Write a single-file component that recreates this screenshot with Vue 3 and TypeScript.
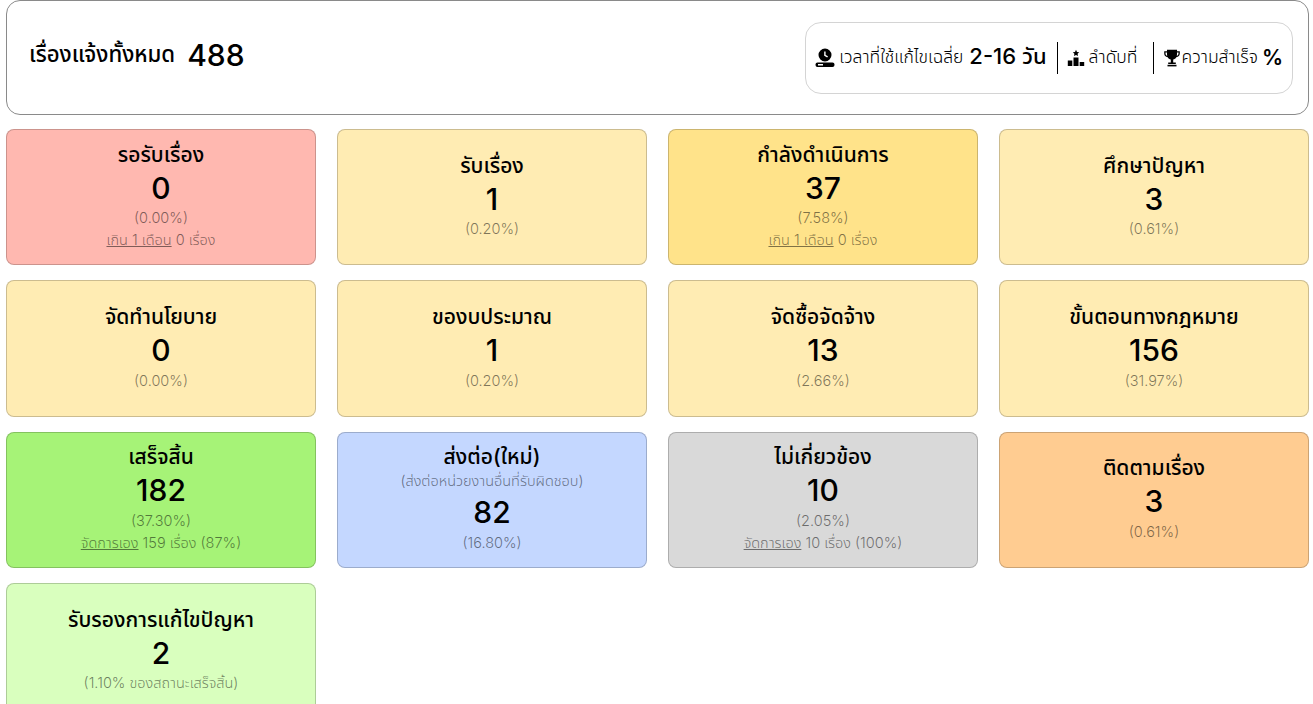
<script setup lang="ts">
interface Card {
  title: string
  hint?: string
  count: number
  pct: string
  linkText?: string
  rest?: string
  tone: string
}

const cards: Card[] = [
  { title: 'รอรับเรื่อง', count: 0, pct: '(0.00%)', linkText: 'เกิน 1 เดือน', rest: ' 0 เรื่อง', tone: 'red' },
  { title: 'รับเรื่อง', count: 1, pct: '(0.20%)', tone: 'cream' },
  { title: 'กำลังดำเนินการ', count: 37, pct: '(7.58%)', linkText: 'เกิน 1 เดือน', rest: ' 0 เรื่อง', tone: 'yellow' },
  { title: 'ศึกษาปัญหา', count: 3, pct: '(0.61%)', tone: 'cream' },
  { title: 'จัดทำนโยบาย', count: 0, pct: '(0.00%)', tone: 'cream' },
  { title: 'ของบประมาณ', count: 1, pct: '(0.20%)', tone: 'cream' },
  { title: 'จัดซื้อจัดจ้าง', count: 13, pct: '(2.66%)', tone: 'cream' },
  { title: 'ขั้นตอนทางกฎหมาย', count: 156, pct: '(31.97%)', tone: 'cream' },
  { title: 'เสร็จสิ้น', count: 182, pct: '(37.30%)', linkText: 'จัดการเอง', rest: ' 159 เรื่อง (87%)', tone: 'green' },
  { title: 'ส่งต่อ(ใหม่)', hint: '(ส่งต่อหน่วยงานอื่นที่รับผิดชอบ)', count: 82, pct: '(16.80%)', tone: 'blue' },
  { title: 'ไม่เกี่ยวข้อง', count: 10, pct: '(2.05%)', linkText: 'จัดการเอง', rest: ' 10 เรื่อง (100%)', tone: 'grey' },
  { title: 'ติดตามเรื่อง', count: 3, pct: '(0.61%)', tone: 'orange' },
  { title: 'รับรองการแก้ไขปัญหา', count: 2, pct: '(1.10% ของสถานะเสร็จสิ้น)', tone: 'lime' },
]
</script>

<template>
  <div class="page">
    <header class="summary">
      <div class="total">
        <span class="total-label">เรื่องแจ้งทั้งหมด</span>
        <span class="total-num">488</span>
      </div>
      <div class="stats">
        <div class="stat stat-time">
          <svg class="ico" width="20" height="20" viewBox="0 0 20 20">
            <path fill="#000" fill-rule="evenodd" d="M10 0.5a6.500 6.500 0 1 1 0 13a6.500 6.500 0 0 1 0-13zM9.200 3.500v4.200l3 1.800l.8-1.200l-2.400-1.400V3.500z" />
            <path fill="#000" fill-rule="evenodd" d="M2.500 14.500h15a2 2 0 0 1 2 2v.5a2 2 0 0 1-2 2h-15a2 2 0 0 1-2-2v-.5a2 2 0 0 1 2-2zM3 16v1.500h5V16z" />
          </svg>
          <span class="stat-text">เวลาที่ใช้แก้ไขเฉลี่ย</span>
          <b class="stat-strong">2-16 วัน</b>
        </div>
        <div class="stat stat-rank">
          <svg class="ico" width="18" height="18" viewBox="0 0 18 18">
            <path fill="#000" d="M9 .8l1 2.100l2.200.3l-1.600 1.500l.4 2.200L9 5.900L7 6.900l.4-2.200L5.800 3.200L8 2.900zM6.500 8.500h5v8.500h-5zM.8 11.500h4.500v5.500H.8zM12.700 13h4.500v4h-4.500z" />
          </svg>
          <span class="stat-text">ลำดับที่</span>
        </div>
        <div class="stat stat-win">
          <svg class="ico" width="16" height="18" viewBox="0 0 16 18">
            <path fill="#000" fill-rule="evenodd" d="M3 .8h10v1.400h2.800v2.300c0 2-1.400 3.500-3.500 3.700c-.7 1.300-1.800 2.100-3.100 2.400v2.900h2.600v1.500H4.200v-1.500h2.600v-2.900c-1.300-.3-2.400-1.100-3.100-2.400C1.600 8 .2 6.500.2 4.500V2.200H3zM1.500 3.500v1c0 1.200.7 2.100 1.700 2.400c-.1-.5-.2-1-.2-1.600V3.500zM13 3.500v1.800c0 .6-.1 1.100-.2 1.600c1-.3 1.700-1.200 1.700-2.400v-1z" />
            <rect x="3.500" y="15.800" width="9" height="1.600" />
          </svg>
          <span class="stat-text">ความสำเร็จ</span>
          <b class="stat-strong stat-pct">%</b>
        </div>
      </div>
    </header>

    <section class="grid">
      <article v-for="card in cards" :key="card.title" class="card" :class="card.tone">
        <div class="card-title">{{ card.title }}</div>
        <div v-if="card.hint" class="card-small">{{ card.hint }}</div>
        <div class="card-num">{{ card.count }}</div>
        <div class="card-small">{{ card.pct }}</div>
        <div v-if="card.linkText" class="card-small">
          <u>{{ card.linkText }}</u>{{ card.rest }}
        </div>
      </article>
    </section>
  </div>
</template>

<style>
html, body {
  margin: 0;
  background: #fff;
}
</style>

<style scoped>
.page {
  padding: 0 4px 0 6px;
  font-family: Inter, "Noto Sans Thai", sans-serif;
  color: #000;
}

.summary {
  height: 115px;
  box-sizing: border-box;
  border: 1px solid #8a8a8a;
  border-radius: 14px;
  display: flex;
  align-items: center;
  justify-content: space-between;
  padding: 0 15px 5px 22px;
  margin-bottom: 13.950px;
}
.total {
  display: flex;
  align-items: center;
  gap: 12px;
}
.total-label { font-size: 22.200px; font-weight: 500; }
.total-num { font-size: 30px; font-weight: 500; }

.stats {
  height: 72px;
  box-sizing: border-box;
  border: 1px solid #d4d4d4;
  border-radius: 16px;
  display: flex;
  align-items: center;
  padding: 0 9px;
  margin-top: 5px;
}
.stat {
  display: flex;
  align-items: center;
  height: 32px;
  gap: 4px;
}
.stat-rank { border-left: 1px solid #000; margin-left: 10px; padding-left: 9px; width: 96px; box-sizing: border-box; }
.stat-win { border-left: 1px solid #000; padding-left: 10px; gap: 2px; }
.stat-text { font-size: 17.500px; font-weight: 300; }
.stat-strong { font-size: 22px; font-weight: 500; margin-left: 2px; }
.stat-pct { font-size: 21px; font-weight: 600; }
.ico { flex: none; }

.grid {
  display: grid;
  grid-template-columns: repeat(4, 310px);
  column-gap: 21px;
  row-gap: 14.850px;
}
.card {
  height: 136.550px;
  box-sizing: border-box;
  border: 1px solid rgba(0, 0, 0, 0.2);
  border-radius: 8px;
  padding-bottom: 1.500px;
  display: flex;
  flex-direction: column;
  align-items: center;
  justify-content: center;
  text-align: center;
}
.card-title { font-size: 21px; font-weight: 500; line-height: 26px; }
.card-num { font-size: 30px; font-weight: 500; line-height: 40px; margin-bottom: -0.500px; }
.card-small { font-size: 14.500px; font-weight: 300; line-height: 22px; color: rgba(0, 0, 0, 0.5); }

.red { background: #ffb8b0; }
.cream { background: #ffecb3; }
.yellow { background: #ffe38a; }
.green { background: #a6f377; }
.blue { background: #c4d7ff; }
.grey { background: #d9d9d9; }
.orange { background: #ffcc91; }
.lime { background: #d9ffbe; }
</style>
